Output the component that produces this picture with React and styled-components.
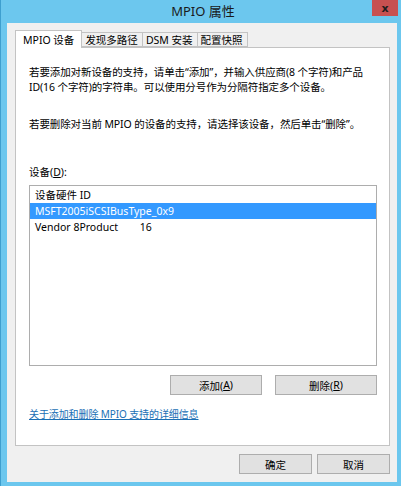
import React from "react";
import styled, { createGlobalStyle } from "styled-components";

const GlobalStyle = createGlobalStyle`
  html, body {
    margin: 0;
    padding: 0;
    background: #ffffff;
  }
  * {
    box-sizing: border-box;
  }
`;

const FONT = `"Noto Sans", "Noto Sans CJK SC", sans-serif`;

const Window = styled.div`
  width: 401px;
  height: 486px;
  display: flex;
  flex-direction: column;
  background: #6cc7ee;
  border-left: 1px solid #3e9fcf;
  font-family: ${FONT};
  font-size: 10.5px;
  color: #000;
`;

const TitleBar = styled.div`
  height: 23px;
  display: flex;
  align-items: flex-start;
  justify-content: center;
  position: relative;
`;

const Title = styled.div`
  margin-top: 3px;
  margin-left: 4px;
  font-size: 13px;
  line-height: 16px;
  color: #1a1a1a;
`;

const CloseButton = styled.div`
  position: absolute;
  top: 0;
  right: 3px;
  width: 26px;
  height: 16px;
  background: #c75050;
  display: flex;
  align-items: center;
  justify-content: center;
  color: #1e1e1e;
  font-weight: bold;
  font-size: 11px;
  font-family: "DejaVu Sans", sans-serif;
`;

const Client = styled.div`
  flex: 1;
  margin: 0 4px 4px 6px;
  background: #f0f0f0;
  padding: 7px 7px 8px 8px;
  display: flex;
  flex-direction: column;
`;

const TabRow = styled.div`
  display: flex;
  align-items: flex-end;
  height: 17px;
  position: relative;
  z-index: 1;
`;

const Tab = styled.div`
  height: ${(p) => (p.$active ? "18px" : "15px")};
  margin-bottom: ${(p) => (p.$active ? "-1px" : "0")};
  padding: ${(p) => (p.$active ? "0 7px" : "0 4px 0 3px")};
  background: ${(p) => (p.$active ? "#ffffff" : "#f0f0f0")};
  border: 1px solid #c3c3c3;
  border-bottom: ${(p) => (p.$active ? "none" : "1px solid #c3c3c3")};
  margin-left: ${(p) => (p.$first ? "0" : "-1px")};
  display: flex;
  align-items: center;
  white-space: nowrap;
  line-height: 14px;
`;

const Panel = styled.div`
  height: 399px;
  background: #ffffff;
  border: 1px solid #c3c3c3;
  padding: 17px 12px 0 13px;
  display: flex;
  flex-direction: column;
`;

const Intro = styled.div`
  line-height: 15px;
  letter-spacing: -0.1px;
`;

const Note = styled.div`
  margin-top: 22px;
  line-height: 15px;
  letter-spacing: -0.1px;
`;

const Label = styled.div`
  margin-top: 33px;
  line-height: 15px;
`;

const ListBox = styled.div`
  margin-top: 5px;
  width: 348px;
  height: 181px;
  border: 1px solid #adadad;
  background: #ffffff;
  padding: 1px 0;
`;

const Row = styled.div`
  height: 16px;
  line-height: 16px;
  padding-left: 5px;
  white-space: pre;
  background: ${(p) => (p.$selected ? "#3399ff" : "transparent")};
  color: ${(p) => (p.$selected ? "#ffffff" : "#000000")};
`;

const ActionRow = styled.div`
  margin-top: 9px;
  width: 348px;
  display: flex;
  justify-content: flex-end;
  gap: 13px;
`;

const Button = styled.button`
  width: ${(p) => p.$w || 73}px;
  height: 20px;
  padding: 0;
  background: #e1e1e1;
  border: 1px solid #adadad;
  font-family: ${FONT};
  font-size: 10.5px;
  color: #000;
  display: flex;
  align-items: center;
  justify-content: center;
`;

const Key = styled.span`
  text-decoration: underline;
`;

const HelpLink = styled.a`
  margin-top: 12px;
  color: #1a6fb5;
  text-decoration: underline;
  font-size: 10px;
  letter-spacing: -0.1px;
  line-height: 15px;
  align-self: flex-start;
  cursor: pointer;
`;

const Footer = styled.div`
  margin-top: 8px;
  display: flex;
  justify-content: flex-end;
  gap: 5px;
`;

export default function App() {
  return (
    <>
      <GlobalStyle />
      <Window>
        <TitleBar>
          <Title>MPIO 属性</Title>
          <CloseButton>x</CloseButton>
        </TitleBar>
        <Client>
          <TabRow>
            <Tab $active $first>MPIO 设备</Tab>
            <Tab>发现多路径</Tab>
            <Tab>DSM 安装</Tab>
            <Tab>配置快照</Tab>
          </TabRow>
          <Panel>
            <Intro>
              若要添加对新设备的支持，请单击“添加”，并输入供应商(8 个字符)和产品
              <br />
              ID(16 个字符)的字符串。可以使用分号作为分隔符指定多个设备。
            </Intro>
            <Note>
              若要删除对当前 MPIO 的设备的支持，请选择该设备，然后单击“删除”。
            </Note>
            <Label>
              设备(<Key>D</Key>):
            </Label>
            <ListBox>
              <Row>设备硬件 ID</Row>
              <Row $selected>MSFT2005iSCSIBusType_0x9</Row>
              <Row>{"Vendor 8Product        16"}</Row>
            </ListBox>
            <ActionRow>
              <Button $w={92}>
                添加(<Key>A</Key>)
              </Button>
              <Button $w={102}>
                删除(<Key>R</Key>)
              </Button>
            </ActionRow>
            <HelpLink>关于添加和删除 MPIO 支持的详细信息</HelpLink>
          </Panel>
          <Footer>
            <Button>确定</Button>
            <Button>取消</Button>
          </Footer>
        </Client>
      </Window>
    </>
  );
}
